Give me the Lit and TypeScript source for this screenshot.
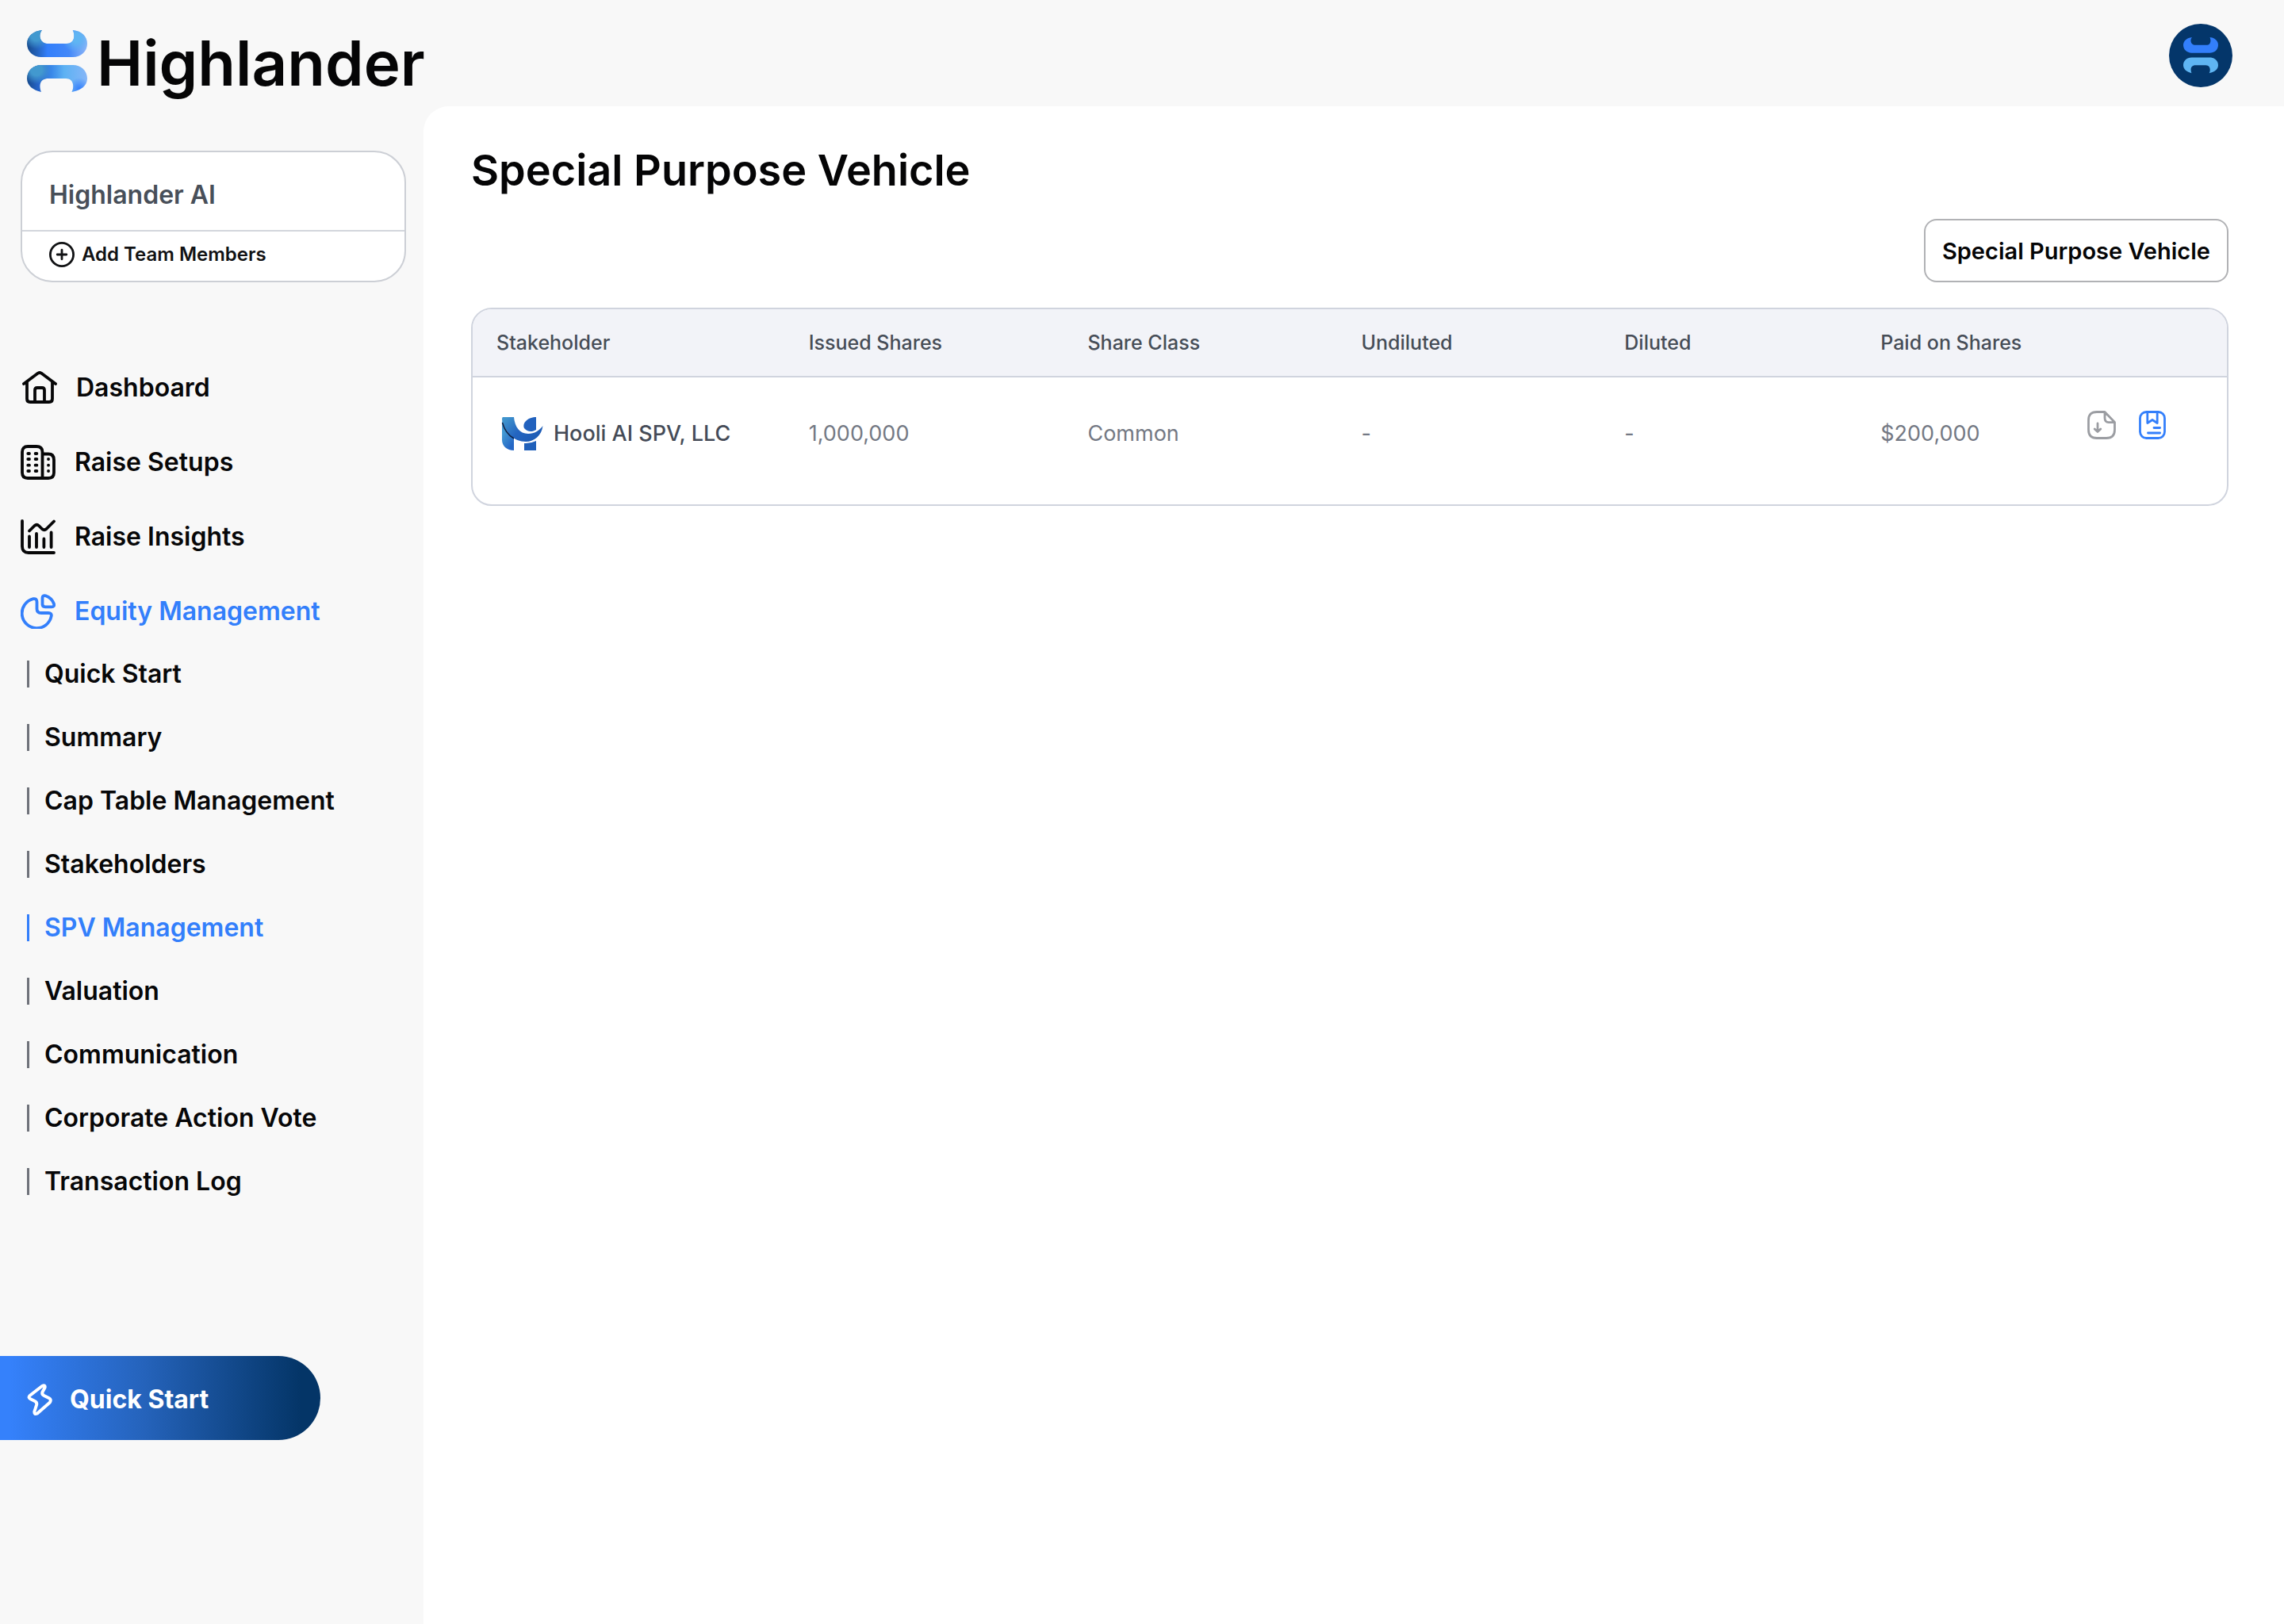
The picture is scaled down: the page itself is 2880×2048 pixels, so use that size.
import { LitElement, html, css, svg } from "lit";
import { customElement, property } from "lit/decorators.js";
import { classMap } from "lit/directives/class-map.js";

const MARK_TOP =
  "M29 12C18 13 10 20 10 29C10 39 18 46 28 46H68C78 46 86 39 86 29C86 20 79 13 67.7 12C70.5 17 71 29 60 29H37C26 29 24 18 29 12Z";
const MARK_BOTTOM =
  "M28 90C18 88 10 82 10 73C10 63 18 56 28 56H68C78 56 86 63 86 73C86 82 78 88 66.5 90C70 84 69 73 59 73H37C26 73 25 82 28 90Z";

const icons = {
  home: svg`<path d="M2 17L20 3.6Q22 2.4 24 3.6L42 17M6 15V36Q6 40 10 40H34Q38 40 38 36V15M16 40V25Q16 22 19 22H25Q28 22 28 25V40"/>`,
  building: svg`<path d="M27.5 42V9Q27.5 2 20 2H9Q2 2 2 9V35Q2 42 9 42H35Q42 42 42 35V19Q42 11.5 35 11.5H27.5"/>
    <path d="M9.3 11H11M18.6 11H20.4M9.3 18H11M18.6 18H20.4M9.3 25.7H11M18.6 25.7H20.4M9.3 33H11M18.6 33H20.4M35 18H35.1M35 25.7H35.1M35 33H35.1"/>`,
  chart: svg`<path d="M2 2V34Q2 42 10 42H42M11 14.5L17.5 8Q20.3 5.4 23 8L27 12Q29.8 14.4 32.5 12L42 2.5M11 21.5V35M20 18V35M29.4 24.5V35M38.6 16.5V35"/>`,
  pie: svg`<path d="M16 6.2Q20.5 5.5 20.5 10V19Q20.5 24 26 24H35Q39.5 24 38.7 28A18.7 18.7 0 1 1 16 6.2Z"/>
    <path d="M27.5 5Q27.5 1.5 31.5 2.3A17 17 0 0 1 42 12.5Q43 16.3 39 16.3H31Q27.5 16.3 27.5 13Z"/>`,
};

interface NavItem {
  label: string;
  icon: keyof typeof icons;
  active?: boolean;
}

interface Holding {
  name: string;
  issued: string;
  shareClass: string;
  undiluted: string;
  diluted: string;
  paid: string;
}

@customElement("brand-mark")
class BrandMark extends LitElement {
  @property({ type: Boolean }) flat = false;

  static styles = css`
    :host {
      display: block;
    }
    svg {
      display: block;
      width: 100%;
    }
  `;

  render() {
    if (this.flat) {
      return html`<svg viewBox="10 12 76 78" aria-hidden="true">
        <path fill="#337ffb" d=${MARK_TOP} />
        <path fill="#5fb5f3" d=${MARK_BOTTOM} />
      </svg>`;
    }
    return html`<svg viewBox="10 12 76 78" aria-hidden="true">
      <defs>
        <linearGradient id="upper">
          <stop offset="0" stop-color="#174a8c" />
          <stop offset=".16" stop-color="#2361b8" />
          <stop offset=".34" stop-color="#337ffb" />
          <stop offset=".7" stop-color="#4388f8" />
          <stop offset="1" stop-color="#8db6f8" />
        </linearGradient>
        <linearGradient id="lower">
          <stop offset="0" stop-color="#174a8c" />
          <stop offset=".2" stop-color="#2766cc" />
          <stop offset=".42" stop-color="#3b8bea" />
          <stop offset=".62" stop-color="#5db2f3" />
          <stop offset="1" stop-color="#86b6f8" />
        </linearGradient>
        <radialGradient id="teal" gradientUnits="userSpaceOnUse" cx="22" cy="18" r="18">
          <stop offset=".4" stop-color="#4299cf" />
          <stop offset="1" stop-color="#4299cf" stop-opacity="0" />
        </radialGradient>
        <radialGradient id="sky" gradientUnits="userSpaceOnUse" cx="72" cy="22" r="18">
          <stop offset=".3" stop-color="#5fb5f3" />
          <stop offset="1" stop-color="#5fb5f3" stop-opacity="0" />
        </radialGradient>
        <radialGradient id="teal-low" gradientUnits="userSpaceOnUse" cx="22" cy="62" r="18">
          <stop offset=".4" stop-color="#4299cf" />
          <stop offset="1" stop-color="#4299cf" stop-opacity="0" />
        </radialGradient>
        <radialGradient id="deep" gradientUnits="userSpaceOnUse" cx="76" cy="86" r="14">
          <stop offset="0" stop-color="#337ffb" />
          <stop offset="1" stop-color="#337ffb" stop-opacity="0" />
        </radialGradient>
      </defs>
      <path fill="url(#upper)" d=${MARK_TOP} />
      <path fill="url(#teal)" d=${MARK_TOP} />
      <path fill="url(#sky)" d=${MARK_TOP} />
      <path fill="url(#lower)" d=${MARK_BOTTOM} />
      <path fill="url(#teal-low)" d=${MARK_BOTTOM} />
      <path fill="url(#deep)" d=${MARK_BOTTOM} />
    </svg>`;
  }
}

@customElement("side-nav")
class SideNav extends LitElement {
  items: NavItem[] = [
    { label: "Dashboard", icon: "home" },
    { label: "Raise Setups", icon: "building" },
    { label: "Raise Insights", icon: "chart" },
    { label: "Equity Management", icon: "pie", active: true },
  ];

  sections = [
    "Quick Start",
    "Summary",
    "Cap Table Management",
    "Stakeholders",
    "SPV Management",
    "Valuation",
    "Communication",
    "Corporate Action Vote",
    "Transaction Log",
  ];

  current = "SPV Management";

  static styles = css`
    :host {
      display: block;
      font-size: 32px;
      font-weight: 600;
      line-height: 40px;
    }
    ul {
      list-style: none;
      margin: 0;
      padding: 0;
    }
    a {
      color: #070708;
      text-decoration: none;
      display: flex;
      align-items: center;
    }
    .active {
      color: #337ffb;
    }
    .card {
      margin: 56px 22px 0 26px;
      border: 2px solid #cccfd5;
      border-radius: 40px;
      background: #fff;
      overflow: hidden;
    }
    .company {
      padding: 34px 34px 24px;
      color: #484f59;
      border-bottom: 2px solid #d3d6dc;
    }
    .add {
      display: flex;
      align-items: center;
      gap: 9px;
      width: 100%;
      padding: 13px 34px 17px;
      border: 0;
      background: none;
      font: inherit;
      font-size: 24px;
      line-height: 32px;
      color: #111214;
    }
    .add svg {
      width: 32px;
      height: 32px;
    }
    svg {
      flex: none;
      fill: none;
      stroke: currentColor;
      stroke-linecap: round;
      stroke-linejoin: round;
    }
    .primary {
      display: grid;
      gap: 16px;
      margin-top: 94px;
      padding-left: 26px;
    }
    .primary a {
      height: 78px;
      gap: 24px;
    }
    .primary svg {
      width: 44px;
      height: 44px;
      stroke-width: 3.8px;
    }
    .primary li:first-child {
      padding-left: 2px;
    }
    .secondary {
      padding-left: 34px;
    }
    .secondary a {
      height: 80px;
      gap: 19px;
    }
    .secondary a::before {
      content: "";
      width: 3px;
      height: 34px;
      background: #6f727a;
    }
    .secondary a.active::before {
      background: #337ffb;
    }
    .start {
      display: flex;
      align-items: center;
      gap: 22px;
      width: 404px;
      height: 106px;
      margin: 180px 0 0;
      padding: 4px 34px 0;
      border: 0;
      border-radius: 0 53px 53px 0;
      background: linear-gradient(90deg, #3581fb 3%, #2563bb 45%, #043567 94%);
      color: #fff;
      font: inherit;
      font-weight: 700;
    }
    .start svg {
      width: 32px;
      height: 42px;
      stroke-width: 4px;
    }
  `;

  render() {
    return html`
      <div class="card">
        <div class="company">Highlander AI</div>
        <button class="add" type="button">
          <svg viewBox="0 0 32 32" stroke-width="2.8" aria-hidden="true">
            <circle cx="16" cy="16" r="14.6" />
            <path d="M16 10.2V21.8M10.2 16H21.8" />
          </svg>
          Add Team Members
        </button>
      </div>
      <nav aria-label="Main">
        <ul class="primary">
          ${this.items.map(
            (item) => html`<li>
              <a href="#" class=${classMap({ active: !!item.active })}>
                <svg viewBox="0 0 44 44" aria-hidden="true">${icons[item.icon]}</svg>
                ${item.label}
              </a>
            </li>`
          )}
        </ul>
        <ul class="secondary">
          ${this.sections.map(
            (label) => html`<li>
              <a href="#" class=${classMap({ active: label === this.current })}>${label}</a>
            </li>`
          )}
        </ul>
      </nav>
      <button class="start" type="button">
        <svg viewBox="0 0 32 42" aria-hidden="true">
          <path
            d="M19 4L3.5 16Q1.2 18.6 4.5 20.3L10 23Q13 24.5 12 28L9.4 36Q9 40.5 13 38.5L29 24.4Q31 20.8 28 19.2L21.5 16Q18.5 14.5 19.5 11.5L22.5 6Q23.5 2 19 4Z"
          />
        </svg>
        Quick Start
      </button>
    `;
  }
}

@customElement("spv-table")
class SpvTable extends LitElement {
  rows: Holding[] = [
    {
      name: "Hooli AI SPV, LLC",
      issued: "1,000,000",
      shareClass: "Common",
      undiluted: "-",
      diluted: "-",
      paid: "$200,000",
    },
  ];

  static styles = css`
    :host {
      display: block;
      border: 2px solid #d0d4de;
      border-radius: 26px;
      overflow: hidden;
    }
    table {
      width: 100%;
      table-layout: fixed;
      border-collapse: separate;
      border-spacing: 0;
    }
    th,
    td {
      box-sizing: border-box;
      padding: 0 0 0 30px;
      text-align: left;
      white-space: nowrap;
    }
    th {
      height: 86px;
      background: #f2f3f8;
      border-bottom: 2px solid #d0d4de;
      color: #464d57;
      font-size: 25px;
      font-weight: 500;
    }
    td {
      height: 160px;
      padding-bottom: 18px;
      color: #747984;
      font-size: 27px;
      line-height: 32px;
    }
    .holder {
      width: 17.8%;
    }
    .issued {
      width: 15.9%;
    }
    .class {
      width: 15.6%;
    }
    .undiluted {
      width: 15%;
    }
    .diluted {
      width: 14.6%;
    }
    .paid {
      width: 11.8%;
    }
    .name {
      display: flex;
      align-items: center;
      gap: 4px;
      color: #454b57;
      font-weight: 500;
    }
    .logo {
      width: 68px;
      height: 48px;
      flex: none;
    }
    .actions {
      display: flex;
      gap: 29px;
      padding-bottom: 22px;
    }
    button {
      padding: 0;
      border: 0;
      background: none;
      color: #9b9da2;
      display: flex;
    }
    button.docs {
      color: #337ffb;
    }
    button svg {
      height: 36px;
      fill: none;
      stroke: currentColor;
      stroke-width: 2.8px;
      stroke-linecap: round;
      stroke-linejoin: round;
    }
  `;

  private logo() {
    return html`<svg class="logo" viewBox="6 12 68 48" aria-hidden="true">
      <defs>
        <linearGradient id="swoosh" x1="0" x2="1" y1="0" y2=".6">
          <stop offset=".1" stop-color="#3f94cd" />
          <stop offset=".55" stop-color="#2465c0" />
          <stop offset="1" stop-color="#1d5cb5" />
        </linearGradient>
        <linearGradient id="stem" x1="0" x2=".5" y1="0" y2="1">
          <stop offset=".4" stop-color="#4299d2" />
          <stop offset="1" stop-color="#2567c6" />
        </linearGradient>
      </defs>
      <path fill="url(#stem)" d="M13 18C16 30 20 37 28 41V57C19 57 13 51 13 44Z" />
      <path fill="url(#swoosh)" d="M14 15H28C29 27 35 36 46 36C54 36 60 32 64.5 26C63 38 54 46 43 46C28 46 17 35 13 18Q13 15 14 15Z" />
      <path fill="none" stroke="#0c2147" stroke-width="1.6" d="M13.5 22C16 31 21 38 28 42" />
      <path fill="#2262be" d="M56 15V31C51 34 45 34 41 29C38 22 46 15 56 15Z" />
      <path fill="#2060ba" d="M41 48Q49 48.5 56 45V57H41Z" />
    </svg>`;
  }

  render() {
    return html`<table>
      <thead>
        <tr>
          <th class="holder" scope="col">Stakeholder</th>
          <th class="issued" scope="col">Issued Shares</th>
          <th class="class" scope="col">Share Class</th>
          <th class="undiluted" scope="col">Undiluted</th>
          <th class="diluted" scope="col">Diluted</th>
          <th class="paid" scope="col">Paid on Shares</th>
          <th aria-label="Actions"></th>
        </tr>
      </thead>
      <tbody>
        ${this.rows.map(
          (row) => html`<tr>
            <td><div class="name">${this.logo()}${row.name}</div></td>
            <td>${row.issued}</td>
            <td>${row.shareClass}</td>
            <td>${row.undiluted}</td>
            <td>${row.diluted}</td>
            <td>${row.paid}</td>
            <td>
              <div class="actions">
                <button type="button" aria-label="Download">
                  <svg width="36" viewBox="0 0 36 36" aria-hidden="true">
                    <path
                      d="M22 1.5H12Q1.5 1.5 1.5 12V24Q1.5 34.5 12 34.5H24Q34.5 34.5 34.5 24V14.5ZM22 2V9Q22 14.6 27 14.6H34M13 16V26M9.2 23L13 26.6L16.8 23"
                    />
                  </svg>
                </button>
                <button class="docs" type="button" aria-label="Documents">
                  <svg width="34" viewBox="0 0 34 36" aria-hidden="true">
                    <rect x="1.5" y="1.5" width="31" height="33" rx="8" />
                    <path d="M10.8 2V15.5L17 11.5L23.2 15.5V2M19 21.5H26.6M11.5 28H26.6" />
                  </svg>
                </button>
              </div>
            </td>
          </tr>`
        )}
      </tbody>
    </table>`;
  }
}

@customElement("app-root")
class AppRoot extends LitElement {
  static styles = css`
    :host {
      display: flex;
      flex-direction: column;
      min-height: 100vh;
      background: #f8f8f8;
      color: #050506;
      font-family: Inter, "Liberation Sans", sans-serif;
    }
    header {
      display: flex;
      justify-content: space-between;
      align-items: flex-start;
      height: 134px;
    }
    .brand {
      display: flex;
      align-items: flex-start;
      gap: 12px;
      padding: 38px 0 0 34px;
      color: inherit;
      text-decoration: none;
      font-size: 78px;
      font-weight: 600;
      line-height: 84px;
    }
    .brand brand-mark {
      width: 76px;
    }
    .avatar {
      display: grid;
      place-items: center;
      width: 80px;
      height: 80px;
      margin: 30px 65px 0 0;
      padding: 0;
      border: 0;
      border-radius: 50%;
      background: #04366a;
    }
    .avatar brand-mark {
      width: 44px;
    }
    .body {
      display: flex;
      flex: 1;
    }
    side-nav {
      flex: 0 0 534px;
    }
    main {
      flex: 1;
      min-width: 0;
      padding: 49px 70px 48px 60px;
      background: #fff;
      border-top-left-radius: 32px;
    }
    h1 {
      margin: 0;
      font-size: 54px;
      font-weight: 600;
      line-height: 64px;
    }
    .toolbar {
      display: flex;
      justify-content: flex-end;
      margin: 29px 0 32px;
    }
    .spv {
      height: 80px;
      padding: 0 21px;
      border: 2px solid #b1b2b5;
      border-radius: 16px;
      background: #fff;
      color: inherit;
      font: inherit;
      font-size: 29px;
      font-weight: 600;
    }
  `;

  render() {
    return html`
      <header>
        <a class="brand" href="#"><brand-mark></brand-mark>Highlander</a>
        <button class="avatar" type="button" aria-label="Account">
          <brand-mark flat></brand-mark>
        </button>
      </header>
      <div class="body">
        <side-nav></side-nav>
        <main>
          <h1>Special Purpose Vehicle</h1>
          <div class="toolbar">
            <button class="spv" type="button">Special Purpose Vehicle</button>
          </div>
          <spv-table></spv-table>
        </main>
      </div>
    `;
  }
}
